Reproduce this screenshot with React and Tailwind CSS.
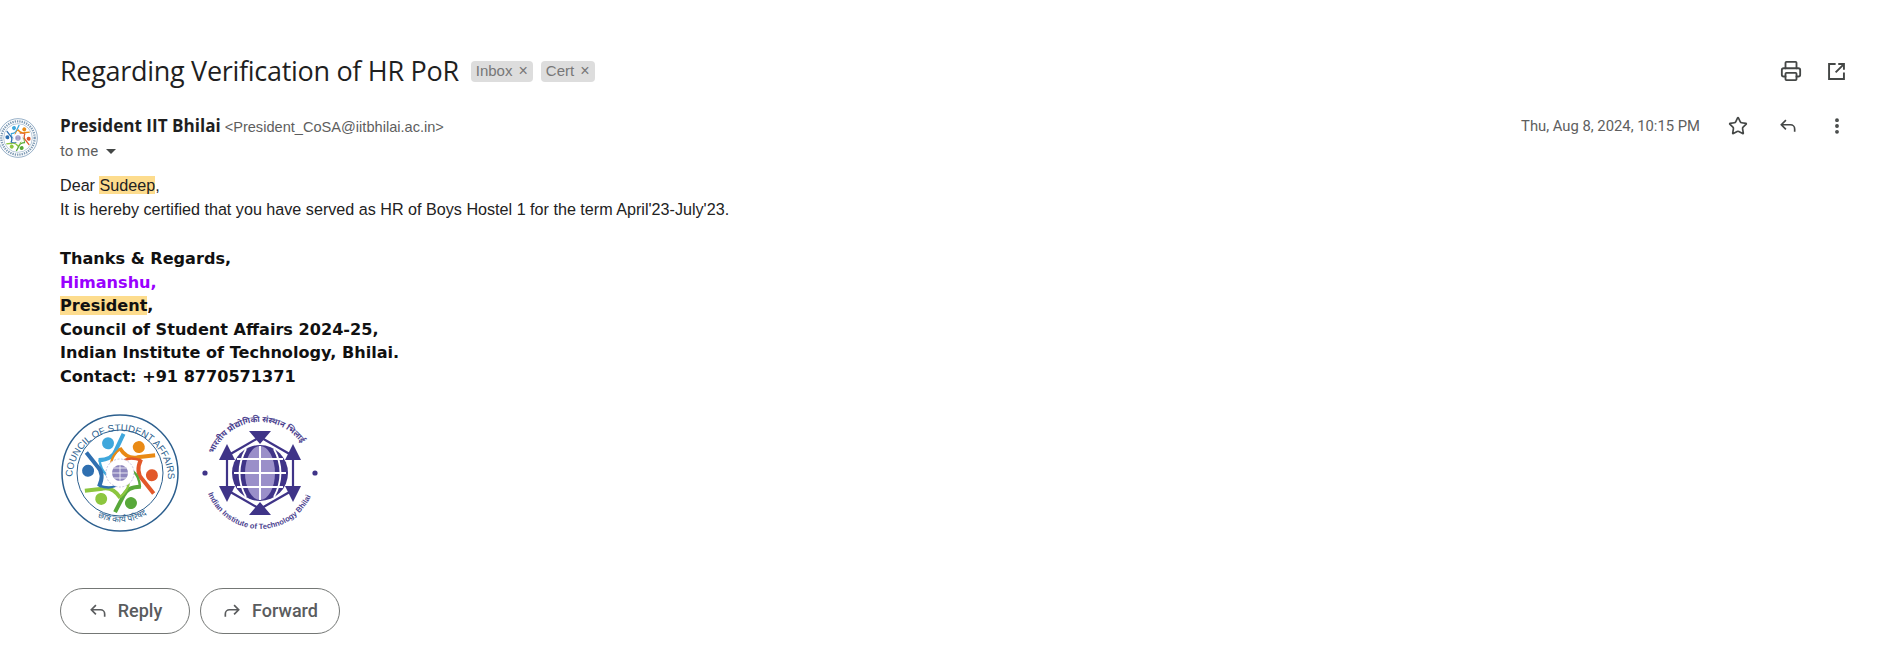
import { Printer, Star, MoreVertical } from "lucide-react";

function ReplyIcon({ size = 20, className = "" }) {
  return (
    <svg width={size} height={size} viewBox="0 0 24 24" fill="none" stroke="currentColor" strokeWidth="2" className={className}>
      <path d="M9.5 5 4 10.5 9.5 16M4 10.5h11a5 5 0 0 1 5 5V19" />
    </svg>
  );
}

function ForwardIcon({ size = 20, className = "" }) {
  return (
    <svg width={size} height={size} viewBox="0 0 24 24" fill="none" stroke="currentColor" strokeWidth="2" className={className}>
      <path d="M14.5 5 20 10.5 14.5 16M20 10.5H9a5 5 0 0 0-5 5V19" />
    </svg>
  );
}

function OpenIcon() {
  return (
    <svg width="21" height="21" viewBox="0 0 24 24" fill="none" stroke="currentColor" strokeWidth="2.2">
      <path d="M11 3.5H3.5v17h17V13M20.5 3.5 11 13M14 3.5h6.5V10" />
    </svg>
  );
}

function CosaLogo({ size, small }) {
  const people = [
    { c: "#3fa7dc", a: -22 },
    { c: "#e98a15", a: 36 },
    { c: "#e2582a", a: 94 },
    { c: "#58a83a", a: 160 },
    { c: "#8cc63f", a: 216 },
    { c: "#2f6fb0", a: 274 },
  ];
  return (
    <svg width={size} height={size} viewBox="0 0 120 120">
      <circle cx="60" cy="60" r="58" fill="white" stroke="#2c5f8e" strokeWidth="1.5" />
      <circle cx="60" cy="60" r="43" fill="white" stroke="#2c5f8e" strokeWidth="1" />
      <defs>
        <path id="cosaTop" d="M 12 66 A 48 48 0 1 1 108 66" />
        <path id="cosaBottom" d="M 25 95 A 50 50 0 0 0 95 95" />
      </defs>
      {small ? (
        <circle cx="60" cy="60" r="50" fill="none" stroke="#7f9bb5" strokeWidth="7" strokeDasharray="4 3" />
      ) : (
        <>
          <text fontSize="9.6" fontFamily="Liberation Sans, sans-serif" fill="#2c5f8e">
            <textPath href="#cosaTop" startOffset="2">COUNCIL OF STUDENT AFFAIRS</textPath>
          </text>
          <text fontSize="8.6" fontFamily="Noto Sans, sans-serif" fill="#2c5f8e">
            <textPath href="#cosaBottom" startOffset="20%">छात्र कार्य परिषद</textPath>
          </text>
        </>
      )}
      {people.map((p) => (
        <g key={p.a} transform={`rotate(${p.a} 60 60)`}>
          <circle cx="60" cy="28" r="6" fill={p.c} />
          <path d="M 45 40 Q 58 45 65 37 L 78 25" fill="none" stroke={p.c} strokeWidth="4" />
          <path d="M 46 40 Q 43 50 47 57" fill="none" stroke={p.c} strokeWidth="2.4" />
        </g>
      ))}
      <circle cx="60" cy="60" r="14" fill="white" stroke="#b9b4d6" strokeWidth="0.8" strokeDasharray="2 1.5" />
      <circle cx="60" cy="60" r="8" fill="#8d86bd" />
      <path d="M 52 60 H 68 M 60 52 V 68 M 54 55 H 66 M 54 65 H 66" stroke="white" strokeWidth="0.8" />
    </svg>
  );
}

function IitLogo() {
  return (
    <svg width="120" height="120" viewBox="0 0 120 120">
      <defs>
        <path id="iitTop" d="M 13 42 A 50 50 0 0 1 107 42" />
        <path id="iitBottom" d="M 7 78 A 56 56 0 0 0 113 78" />
      </defs>
      <text fontSize="8.2" fontFamily="Noto Sans, sans-serif" fontWeight="700" fill="#4b3f8f">
        <textPath href="#iitTop" startOffset="1%">भारतीय प्रौद्योगिकी संस्थान भिलाई</textPath>
      </text>
      <text fontSize="7.6" fontFamily="Liberation Sans, sans-serif" fontWeight="700" fill="#4b3f8f">
        <textPath href="#iitBottom" startOffset="2%">Indian Institute of Technology Bhilai</textPath>
      </text>
      <circle cx="5" cy="60" r="2.6" fill="#3f3488" />
      <circle cx="115" cy="60" r="2.6" fill="#3f3488" />
      <path d="M 60 24 L 27 43 V 77 L 60 96 L 93 77 V 43 Z" fill="none" stroke="#3f3488" strokeWidth="2.2" />
      <path d="M 49 18 H 71 L 60 31 Z M 49 102 H 71 L 60 89 Z M 27 31 L 19 47 H 35 Z M 93 31 L 85 47 H 101 Z M 27 89 L 19 73 H 35 Z M 93 89 L 85 73 H 101 Z" fill="#3f3488" />
      <circle cx="60" cy="60" r="28" fill="#3f3488" />
      <ellipse cx="60" cy="60" rx="15" ry="27" fill="#9a8fc9" />
      <path d="M 34 60 H 86 M 60 33 V 87 M 37 46 H 83 M 37 74 H 83" stroke="white" strokeWidth="2" />
      <path d="M 46 36 Q 33 60 46 84 M 74 36 Q 87 60 74 84" stroke="white" strokeWidth="1.8" fill="none" />
    </svg>
  );
}

function ActionButton({ icon: Icon, label, width }) {
  return (
    <button type="button" className={`${width} h-[46px] rounded-full border border-[#747775] flex items-center justify-center gap-[10px] text-[#5a5c5e] text-[18px] font-medium`}>
      <Icon size={20} />
      {label}
    </button>
  );
}

function Label({ children }) {
  return (
    <span className="h-[21px] px-[5px] rounded-[4px] bg-[#dddddd] text-[#777777] text-[15px] flex items-center gap-[6px] font-['Liberation_Sans',sans-serif]">
      {children}
      <span className="text-[16px] leading-none">×</span>
    </span>
  );
}

export default function App() {
  return (
    <div className="w-[1880px] h-[666px] bg-white overflow-hidden font-['Roboto',sans-serif] text-[#1f1f1f]">
      <div className="flex items-center justify-between pt-[52px] pl-[60px] pr-[33px]">
        <div className="flex items-center gap-3">
          <h1 className="text-[27px] leading-[38px] font-['Open_Sans',sans-serif] tracking-[-0.3px]">Regarding Verification of HR PoR</h1>
          <div className="flex gap-2">
            <Label>Inbox</Label>
            <Label>Cert</Label>
          </div>
        </div>
        <div className="flex items-center gap-[24px] text-[#444746]">
          <Printer size={22} strokeWidth={2} />
          <OpenIcon />
        </div>
      </div>

      <div className="flex mt-[25px]">
        <div className="w-[60px] shrink-0 pt-[3px] -ml-[2px]">
          <CosaLogo size={40} small />
        </div>
        <div className="flex-1 ml-[2px]">
          <div className="flex justify-between pr-[33px]">
            <div>
              <div className="leading-[22px]">
                <span className="font-bold text-[17.1px] text-[#1f1f1f] font-['Open_Sans',sans-serif]">President IIT Bhilai</span>{" "}
                <span className="text-[14.6px] text-[#5e5e5e] font-['Liberation_Sans',sans-serif]">&lt;President_CoSA@iitbhilai.ac.in&gt;</span>
              </div>
              <div className="flex items-center gap-2 text-[15px] leading-[20px] text-[#5e5e5e] mt-[3px]">
                to me
                <span className="w-0 h-0 border-x-[5px] border-x-transparent border-t-[5px] border-t-[#444746]" />
              </div>
            </div>
            <div className="flex items-center h-[22px] text-[#5e5e5e]">
              <span className="text-[14.8px]">Thu, Aug 8, 2024, 10:15 PM</span>
              <Star size={20} strokeWidth={2} className="ml-[28px] text-[#444746]" />
              <ReplyIcon className="ml-[30px] text-[#444746]" />
              <MoreVertical size={20} strokeWidth={2.6} className="ml-[29px] text-[#444746]" />
            </div>
          </div>

          <div className="mt-[12px] text-[16.15px] leading-[24px] font-['Liberation_Sans',sans-serif] text-[#222222]">
            <p>Dear <span className="bg-[#fddc8d]">Sudeep</span>,</p>
            <p>It is hereby certified that you have served as HR of Boys Hostel 1 for the term April'23-July'23.</p>
          </div>

          <div className="mt-[26px] text-[16.1px] leading-[23.6px] font-bold font-['DejaVu_Sans',sans-serif] text-[#111111]">
            <p>Thanks &amp; Regards,</p>
            <p className="text-[#9900ff]">Himanshu,</p>
            <p><span className="bg-[#fddc8d]">President</span>,</p>
            <p>Council of Student Affairs 2024-25,</p>
            <p>Indian Institute of Technology, Bhilai.</p>
            <p>Contact: +91 8770571371</p>
          </div>

          <div className="flex gap-[20px] mt-[24px] items-center">
            <CosaLogo size={120} />
            <IitLogo />
          </div>

          <div className="flex gap-[10px] mt-[55px]">
            <ActionButton icon={ReplyIcon} label="Reply" width="w-[130px]" />
            <ActionButton icon={ForwardIcon} label="Forward" width="w-[140px]" />
          </div>
        </div>
      </div>
    </div>
  );
}
